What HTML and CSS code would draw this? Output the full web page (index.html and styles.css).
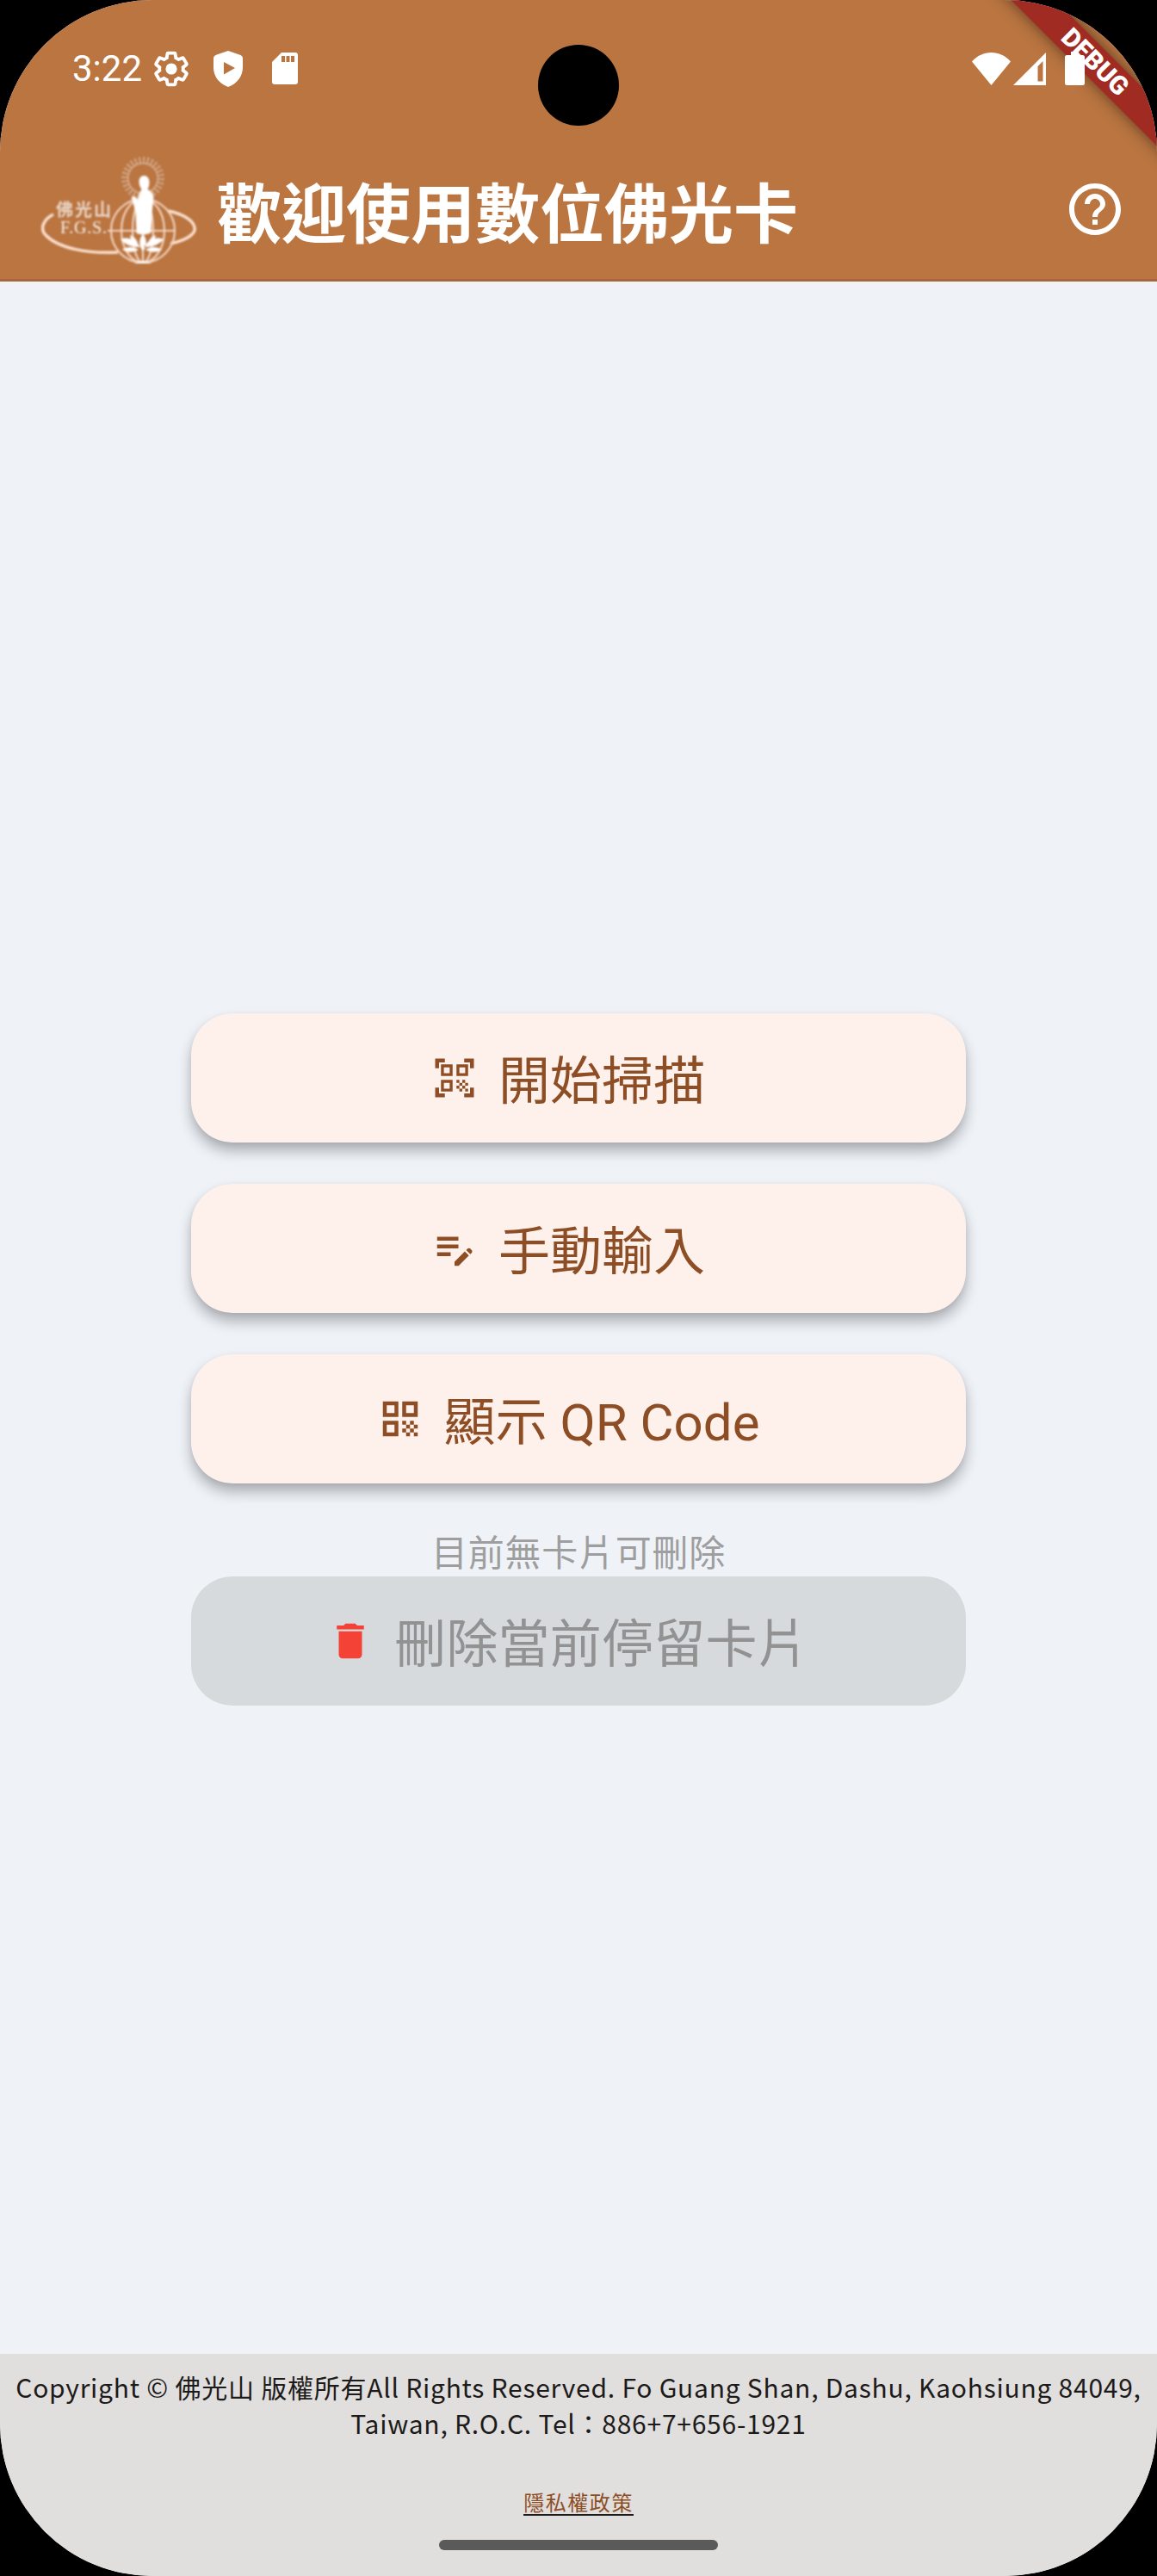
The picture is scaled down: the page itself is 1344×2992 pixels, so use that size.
FILE: index.html
```html
<!DOCTYPE html>
<html lang="zh-Hant">
<head>
    <meta charset="UTF-8">
    <meta name="viewport" content="width=device-width, initial-scale=1.0">
    <title>數位佛光卡</title>
    <link rel="stylesheet" href="styles.css">
</head>
<body>
    <div class="screen">
        <header class="top">
            <div class="status-bar">
                <span class="time">3:22</span>
                <div class="notifications">
                    <svg class="gear" viewBox="0 0 24 24"><path d="M19.43 12.98c.04-.32.07-.64.07-.98 0-.34-.03-.66-.07-.98l2.11-1.65c.19-.15.24-.42.12-.64l-2-3.46c-.09-.16-.26-.25-.44-.25-.06 0-.12.01-.17.03l-2.49 1c-.52-.4-1.08-.73-1.69-.98l-.38-2.65C14.46 2.18 14.25 2 14 2h-4c-.25 0-.46.18-.49.42l-.38 2.65c-.61.25-1.17.59-1.69.98l-2.49-1c-.06-.02-.12-.03-.18-.03-.17 0-.34.09-.43.25l-2 3.46c-.13.22-.07.49.12.64l2.11 1.65c-.04.32-.07.65-.07.98 0 .33.03.66.07.98l-2.11 1.65c-.19.15-.24.42-.12.64l2 3.46c.09.16.26.25.44.25.06 0 .12-.01.17-.03l2.49-1c.52.4 1.08.73 1.69.98l.38 2.65c.03.24.24.42.49.42h4c.25 0 .46-.18.49-.42l.38-2.65c.61-.25 1.17-.59 1.69-.98l2.49 1c.06.02.12.03.18.03.17 0 .34-.09.43-.25l2-3.46c.12-.22.07-.49-.12-.64l-2.11-1.65z"/><circle cx="12" cy="12" r="3.6"/></svg>
                    <svg class="shield" viewBox="0 0 34 42"><path fill-rule="evenodd" d="M17 0l14.500 5q2.500 1 2.500 3.500V19C34 30 27 38.500 17 42 7 38.500 0 30 0 19V8.500Q0 6 2.500 5zM12 13v14.500L25 20z"/></svg>
                    <svg class="sd" viewBox="0 0 30 37"><path fill-rule="evenodd" d="M11 0h16a3 3 0 0 1 3 3v31a3 3 0 0 1-3 3H3a3 3 0 0 1-3-3V11zM11 4v7h4V4zm5.500 0v7h4V4zM22 4v7h4V4z"/></svg>
                </div>
                <div class="system">
                    <svg class="wifi" viewBox="0 0 45 38"><path d="M22.500 38L0 10.500C12-3.500 33-3.500 45 10.500z"/></svg>
                    <svg class="signal" viewBox="0 0 38 38"><path fill-rule="evenodd" d="M38 0v38H0zM28.500 16v17.500H34.500V10z"/></svg>
                    <svg class="battery" viewBox="0 0 23 39"><path d="M7 0h9v4h4.500A2.500 2.500 0 0 1 23 6.500v30a2.500 2.500 0 0 1-2.500 2.500h-18A2.500 2.500 0 0 1 0 36.500v-30A2.500 2.500 0 0 1 2.500 4H7z"/></svg>
                </div>
            </div>
            <div class="app-bar">
                <svg class="logo" viewBox="0 0 180 125">
                    <!-- halo -->
                    <circle class="halo" cx="118" cy="26" r="20.500"/>
                    <circle class="halo-line" cx="118" cy="26" r="17.500"/>
                    <!-- orbit -->
                    <path class="orbit" d="M14 68C2 74-2 85 5 92c14 15 48 22 84 20M147 64c16 3 29 10 31 19 2 8-10 15-28 19"/>
                    <!-- globe -->
                    <g class="globe">
                        <circle cx="118" cy="87" r="37"/>
                        <ellipse cx="118" cy="87" rx="25" ry="37"/>
                        <ellipse cx="118" cy="87" rx="12" ry="37"/>
                        <path d="M77 87h79M118 90v35"/>
                    </g>
                    <path class="solid" d="M119.500 23c4 0 6 4 6 8 0 3-1 6-2 8 4 2 7 5 7 10l-2 17-1 23c-4 3-12 3-17 1l-1-24-3-12-2-6 4-1 4 5c0-6 2-10 4-13-2-3-3-6-3-9 0-4 2-7 6-7z"/>
                    <path class="solid" d="M118 91c5 5 5 14 0 20-5-6-5-15 0-20zM92 97c8-4 17 0 23 9-9 0-17-2-23-9zm50 0c-8-4-17 0-23 9 9 0 17-2 23-9zM94 109c5-4 13-4 19 0-7 4-14 3-19 0zm46 0c-5-4-13-4-19 0 7 4 14 3 19 0zM103 92c6 2 9 7 10 13-6-3-9-7-10-13zm30 0c-6 2-9 7-10 13 6-3 9-7 10-13zM108 125q10-6 20 0z"/>
                    <text class="logo-zh" x="17" y="70" textLength="64">佛光山</text>
                    <text class="logo-en" x="22" y="90" textLength="54">F.G.S.</text>
                </svg>
                <h1>歡迎使用數位佛光卡</h1>
                <svg class="help" viewBox="0 0 24 24"><path d="M11 18h2v-2h-2v2zm1-16C6.480 2 2 6.480 2 12s4.480 10 10 10 10-4.480 10-10S17.520 2 12 2zm0 18c-4.410 0-8-3.590-8-8s3.590-8 8-8 8 3.590 8 8-3.590 8-8 8zm0-14c-2.210 0-4 1.790-4 4h2c0-1.100.9-2 2-2s2 .9 2 2c0 2-3 1.750-3 5h2c0-2.250 3-2.500 3-5 0-2.210-1.790-4-4-4z"/></svg>
            </div>
            <div class="debug">DEBUG</div>
            <div class="camera"></div>
        </header>

        <main>
            <button class="btn">
                <svg viewBox="0 0 24 24"><path d="M9.500 6.500v3h-3v-3h3M11 5H5v6h6V5zm-1.500 9.500v3h-3v-3h3M11 13H5v6h6v-6zm6.500-6.500v3h-3v-3h3M19 5h-6v6h6V5zm-6 8h1.500v1.500H13V13zm1.500 1.500H16V16h-1.500v-1.500zM16 13h1.500v1.500H16V13zm-3 3h1.500v1.500H13V16zm1.500 1.500H16V19h-1.500v-1.500zM16 16h1.500v1.500H16V16zm1.500-1.500H19V16h-1.500v-1.500zm0 3H19V19h-1.500v-1.500zM22 7h-2V4h-3V2h5v5zm0 15v-5h-2v3h-3v2h5zM2 22h5v-2H4v-3H2v5zM2 2v5h2V4h3V2H2z"/></svg>
                <span>開始掃描</span>
            </button>
            <button class="btn">
                <svg viewBox="0 0 24 24"><path d="M3 10h11v2H3v-2zm0-2h11V6H3v2zm0 8h7v-2H3v2zm15.010-3.130.71-.71c.39-.39 1.020-.39 1.410 0l.71.71c.39.39.39 1.020 0 1.410l-.71.71-2.120-2.120zm-.71.71-5.300 5.300V21h2.120l5.300-5.300-2.120-2.120z"/></svg>
                <span>手動輸入</span>
            </button>
            <button class="btn">
                <svg viewBox="0 0 24 24"><path d="M3 11h8V3H3v8zm2-6h4v4H5V5zM3 21h8v-8H3v8zm2-6h4v4H5v-4zM13 3v8h8V3h-8zm6 6h-4V5h4v4zM19 19h2v2h-2zM13 13h2v2h-2zM15 15h2v2h-2zM13 17h2v2h-2zM15 19h2v2h-2zM17 17h2v2h-2zM17 13h2v2h-2zM19 15h2v2h-2z"/></svg>
                <span>顯示 QR Code</span>
            </button>
            <div class="delete-group">
                <p class="hint">目前無卡片可刪除</p>
                <button class="btn delete" disabled>
                    <svg viewBox="0 0 24 24"><path d="M6 19c0 1.100.9 2 2 2h8c1.100 0 2-.9 2-2V7H6v12zM19 4h-3.500l-1-1h-5l-1 1H5v2h14V4z"/></svg>
                    <span>刪除當前停留卡片</span>
                </button>
            </div>
        </main>

        <footer>
            <p class="copyright">Copyright © 佛光山 版權所有All Rights Reserved. Fo Guang Shan, Dashu, Kaohsiung 84049,<br>Taiwan, R.O.C. Tel：886+7+656-1921</p>
            <a class="privacy">隱私權政策</a>
            <div class="home-bar"></div>
        </footer>
    </div>

    <script>
        // dashed halo: 28 rays round the circle
        const halo = document.querySelector('.halo');
        const step = halo.getTotalLength() / 28;
        halo.style.strokeDasharray = step * 0.45 + ' ' + step * 0.55;
    </script>
</body>
</html>
```
FILE: styles.css
```css
* {
    box-sizing: border-box;
}

body {
    margin: 0;
    background: #000;
    font-family: Roboto, "Noto Sans CJK TC", sans-serif;
}

.screen {
    position: relative;
    display: flex;
    flex-direction: column;
    width: 1344px;
    height: 2992px;
    border-radius: 177px;
    overflow: hidden;
    background: #eff3f8;
}

.top {
    height: 327px;
    background: #ba7541;
    border-bottom: 3px solid #a8663e;
    color: #fff;
}

.top svg {
    fill: #fff;
}

.status-bar {
    position: relative;
    z-index: 2;
    display: flex;
    align-items: center;
    height: 159px;
    padding: 0 84px;
}

.time {
    font-size: 42px;
    line-height: 48px;
}

.notifications {
    display: flex;
    align-items: center;
    margin-left: 12px;
}

.notifications .gear {
    width: 44px;
    height: 44px;
    overflow: visible;
    fill: none;
    stroke: #fff;
    stroke-width: 2.1;
}

.gear circle {
    fill: #fff;
    stroke: none;
}

.shield {
    width: 34px;
    height: 42px;
    margin-left: 27px;
}

.sd {
    width: 30px;
    height: 37px;
    margin-left: 34px;
}

.system {
    display: flex;
    align-items: center;
    margin-left: auto;
}

.wifi {
    width: 45px;
    height: 38px;
}

.signal {
    width: 38px;
    height: 38px;
    margin-left: 3px;
}

.battery {
    width: 23px;
    height: 39px;
    margin-left: 22px;
}

.app-bar {
    display: flex;
    align-items: center;
    height: 168px;
    padding: 0 36px 0 48px;
}

.logo {
    width: 180px;
    height: 125px;
    filter: blur(0.9px);
}

.halo {
    fill: none;
    stroke: #fff;
    stroke-width: 9;
    opacity: 0.35;
}

.halo-line {
    fill: none;
    stroke: #fff;
    stroke-width: 2;
    opacity: 0.25;
}

.orbit {
    fill: none;
    stroke: #fbe0cf;
    stroke-width: 3.5;
}

.globe {
    fill: none;
    stroke: #f3d3bd;
    stroke-width: 2.2;
}

.logo-zh {
    font: bold 20px "Noto Sans CJK TC", sans-serif;
    opacity: 0.7;
}

.logo-en {
    font: 20px "Liberation Serif", serif;
    opacity: 0.9;
}

h1 {
    margin: 0 0 0 24px;
    padding-top: 13px;
    font-size: 75px;
    line-height: 108px;
    font-weight: 700;
}

.help {
    width: 72px;
    height: 72px;
    margin-left: auto;
}

.debug {
    position: absolute;
    z-index: 1;
    top: 54px;
    left: 1122px;
    width: 300px;
    height: 36px;
    background: #a02b22;
    box-shadow: 0 0 18px rgba(0, 0, 0, 0.5);
    transform: rotate(45deg);
    text-align: center;
    font-size: 30px;
    line-height: 36px;
    font-weight: 900;
}

.camera {
    position: absolute;
    top: 52px;
    left: 625px;
    width: 94px;
    height: 94px;
    border-radius: 50%;
    background: #000;
}

main {
    flex: 1;
    display: flex;
    flex-direction: column;
    align-items: center;
    gap: 48px;
    padding-top: 850px;
}

.btn {
    display: flex;
    align-items: center;
    justify-content: center;
    gap: 24px;
    width: 900px;
    height: 150px;
    padding: 0 72px 0 48px;
    border: none;
    border-radius: 48px;
    background: #fef1ec;
    box-shadow: 0 10px 16px rgba(0, 0, 0, 0.28), 0 2px 6px rgba(0, 0, 0, 0.06);
    color: #8e4e25;
    font-family: inherit;
    font-size: 60px;
    line-height: 84px;
}

.btn span {
    padding-top: 9px;
}

.btn svg {
    width: 54px;
    height: 54px;
    fill: #8e4e25;
}

.hint {
    margin: 0;
    padding-top: 8px;
    color: #9e9e9e;
    font-size: 42px;
    line-height: 52px;
    letter-spacing: 0.75px;
    text-align: center;
}

.btn.delete {
    background: #d6dadd;
    box-shadow: none;
    color: #929292;
    letter-spacing: 0.2px;
}

.btn.delete svg {
    fill: #f44336;
}

footer {
    display: flex;
    flex-direction: column;
    align-items: center;
    height: 258px;
    padding-top: 17px;
    background: #e0dfde;
    color: #1d1b19;
    font-family: "Noto Sans CJK TC", sans-serif;
}

.copyright {
    margin: 0;
    font-size: 30px;
    line-height: 42px;
    letter-spacing: 0.75px;
    text-align: center;
    white-space: nowrap;
}

.privacy {
    margin-top: 56px;
    border-bottom: 2px solid #1d1b19;
    color: #8e4e25;
    font-size: 24px;
    line-height: 29px;
    letter-spacing: 1.5px;
}

.home-bar {
    width: 324px;
    height: 12px;
    margin-top: 28px;
    border-radius: 6px;
    background: #5a5a5a;
}
```
